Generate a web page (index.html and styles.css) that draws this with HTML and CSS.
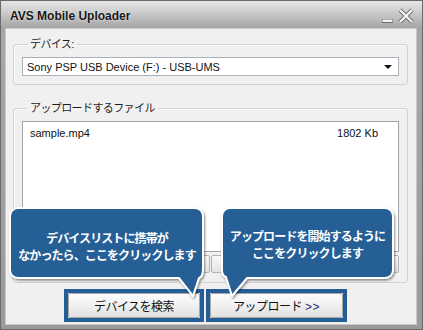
FILE: index.html
```html
<!DOCTYPE html>
<html lang="ja">
<head>
  <meta charset="UTF-8">
  <title>AVS Mobile Uploader</title>
  <link rel="stylesheet" href="styles.css">
</head>
<body>
  <div class="window">
    <div class="titlebar">
      <span class="title">AVS Mobile Uploader</span>
      <svg class="controls" width="34" height="18" viewBox="0 0 34 18">
        <rect x="1" y="12" width="11" height="4" fill="#6a6a6a"/>
        <rect x="1.5" y="12.5" width="10" height="2.5" fill="#f3f3f3"/>
        <path d="M19 3 L31 15 M31 3 L19 15" stroke="#666" stroke-width="4"/>
        <path d="M19 3 L31 15 M31 3 L19 15" stroke="#f4f4f4" stroke-width="2.4"/>
      </svg>
    </div>

    <div class="client">
      <fieldset class="group">
        <legend>デバイス:</legend>
        <div class="combo">
          <span>Sony PSP USB Device (F:) - USB-UMS</span>
          <span class="arrow"></span>
        </div>
      </fieldset>

      <fieldset class="group files">
        <legend>アップロードするファイル</legend>
        <div class="list">
          <div class="row">
            <span>sample.mp4</span>
            <span>1802 Kb</span>
          </div>
        </div>
        <div class="tools">
          <button class="tool"></button>
          <button class="tool"></button>
        </div>
      </fieldset>

      <div class="actions">
        <div class="mark"><button class="btn">デバイスを検索</button></div>
        <div class="mark wide"><button class="btn">アップロード <span class="gt">&gt;&gt;</span></button></div>
      </div>

      <div class="callout left">
        <svg class="bubble" width="200" height="94" viewBox="8 206 200 94">
          <defs>
            <filter id="sh1" x="-10%" y="-10%" width="120%" height="130%">
              <feDropShadow dx="1" dy="1.5" stdDeviation="1" flood-color="#000" flood-opacity="0.45"/>
            </filter>
          </defs>
          <path filter="url(#sh1)" fill="#255e96" stroke="#fff" stroke-width="2"
            d="M18 208 H195 A8 8 0 0 1 203 216 V268 Q203 277 199 278 L193 296 L179 278 H18 A8 8 0 0 1 10 270 V216 A8 8 0 0 1 18 208 Z"/>
        </svg>
        <p>デバイスリストに携帯が<br>なかったら、ここをクリックします</p>
      </div>

      <div class="callout right">
        <svg class="bubble" width="178" height="94" viewBox="219 206 178 94">
          <defs>
            <filter id="sh2" x="-10%" y="-10%" width="120%" height="130%">
              <feDropShadow dx="1" dy="1.5" stdDeviation="1" flood-color="#000" flood-opacity="0.45"/>
            </filter>
          </defs>
          <path filter="url(#sh2)" fill="#255e96" stroke="#fff" stroke-width="2"
            d="M230 208 H385 A8 8 0 0 1 393 216 V270 A8 8 0 0 1 385 278 H247 L232 296 L226 277 Q222 276 222 270 V216 A8 8 0 0 1 230 208 Z"/>
        </svg>
        <p>アップロードを開始するように<br>ここをクリックします</p>
      </div>
    </div>
  </div>
</body>
</html>
```

FILE: styles.css
```css
* {
  box-sizing: border-box;
  font-family: "Liberation Sans", "Noto Sans CJK JP", sans-serif;
}

body {
  margin: 0;
  background-color: #ffffff;
}

.window {
  width: 423px;
  height: 330px;
  display: flex;
  flex-direction: column;
  border: 1px solid #6a6a6a;
  background: linear-gradient(#a8a8a8, #9a9a9a);
}

.titlebar {
  height: 28px;
  display: flex;
  align-items: center;
  justify-content: space-between;
  padding: 0 7px 0 9px;
  background: linear-gradient(#e6e6e6 0, #d0d0d0 35%, #b0b0b0 80%, #a4a4a4 100%);

  .title {
    font-size: 12px;
    font-weight: bold;
    color: #161616;
    text-shadow: 0 0 2px #f4f4f4;
    padding-top: 2px;
  }

  .controls {
    margin-top: 1px;
  }
}

.client {
  position: relative;
  flex: 1;
  margin: 0 6px 5px 5px;
  padding: 8px 8px 0 7px;
  background-color: #f0f0f0;
  box-shadow: 0 0 0 1px #c9c9c9;
  display: flex;
  flex-direction: column;
}

.group {
  margin: 0;
  padding: 6px 8px 8px 8px;
  border: 1px solid #d2d2d2;
  border-radius: 3px;
  box-shadow: inset 1px 1px 0 #fafafa;

  legend {
    margin-left: 5px;
    padding: 0 3px;
    font-size: 11px;
    line-height: 14px;
    letter-spacing: -0.6px;
    color: #1e1e1e;
  }
}

.combo {
  height: 19px;
  display: flex;
  align-items: center;
  justify-content: space-between;
  padding: 0 6px 0 4px;
  background-color: #ffffff;
  border: 1px solid #a9b0b8;
  font-size: 11px;
  color: #111;

  .arrow {
    width: 0;
    height: 0;
    border-left: 4px solid transparent;
    border-right: 4px solid transparent;
    border-top: 4px solid #111;
    margin-top: 1px;
  }
}

.files {
  margin-top: 16px;
  padding-bottom: 9px;
}

.list {
  height: 131px;
  background-color: #ffffff;
  border: 1px solid #a3a3a3;
  padding: 4px 20px 0 7px;

  .row {
    display: flex;
    justify-content: space-between;
    font-size: 11px;
    line-height: 14px;
    color: #111;
  }
}

.tools {
  display: flex;
  gap: 1px;
  margin-top: 3px;

  .tool {
    flex: 1;
    height: 18px;
    border: 1px solid #b2b2b2;
    border-radius: 2px;
    background: linear-gradient(#fafafa, #e2e2e2);
  }
}

.actions {
  display: flex;
  gap: 2px;
  margin: 6px 0 0 51px;

  .mark {
    border: 4px solid #255e96;
    width: 140px;
    height: 33px;
  }
  .wide {
    width: 141px;
  }

  .btn {
    width: 100%;
    height: 100%;
    border: 1px solid #a8a8a8;
    border-radius: 2px;
    background: linear-gradient(#fcfcfc 0, #f0f0f0 50%, #e1e1e1 100%);
    font-size: 12px;
    letter-spacing: -0.5px;
    color: #111;
    padding: 0;
  }

  .gt {
    color: #1d2f6e;
    letter-spacing: 0.5px;
  }
}

/* callouts sit on top of the dialog */
.callout {
  position: absolute;
  height: 94px;

  .bubble {
    position: absolute;
    left: 0;
    top: 0;
  }

  p {
    position: relative;
    margin: 0;
    text-align: center;
    color: #ffffff;
    font-weight: bold;
    font-size: 12px;
    line-height: 17px;
    letter-spacing: -0.9px;
  }
}

.left {
  left: 2px;
  top: 177px;
  width: 200px;

  p {
    width: 194px;
    margin: 25px 0 0 2px;
  }
}

.right {
  left: 213px;
  top: 177px;
  width: 178px;

  p {
    width: 171px;
    margin: 23px 0 0 3px;
  }
}
```
